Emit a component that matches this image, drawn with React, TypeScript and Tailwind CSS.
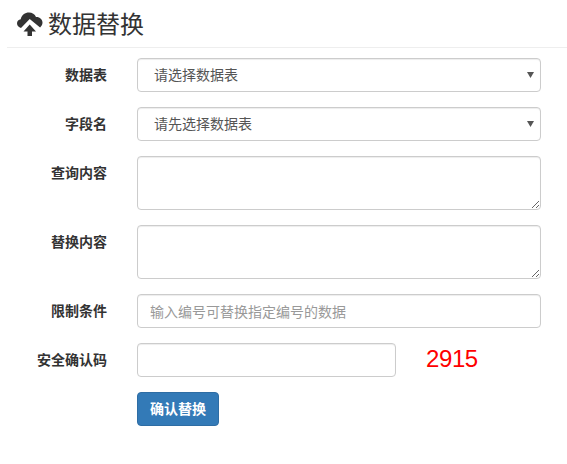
const fontStack = "font-['Open_Sans','Noto_Sans_CJK_SC',sans-serif]";

const CloudUpload = () => (
  <svg viewBox="0 0 26 24" className="w-[26px] h-[24px]" aria-hidden="true">
    <path
      fill="#333"
      d="M4 16C1.700 15.500 0 13.700 0 11.300 0 9 1.700 7.400 3.700 7.200 4.500 3.200 8 0.500 12 0.500c3.200 0 5.800 1.800 7 4.400 3.600-0.300 6.500 2.300 6.500 5.700 0 2-0.900 3.700-2.400 4.800L12.700 7z"
    />
    <path fill="#333" d="M12.700 12.500 19 19.500H15V24H10.500V19.500H6.500z" />
  </svg>
);

const Label = ({ text }: { text: string }) => (
  <label className="w-[100px] shrink-0 text-right text-sm font-bold text-[#333] pt-[7px] leading-5">{text}</label>
);

const Select = ({ text }: { text: string }) => (
  <div className="relative flex-1">
    <select className="w-full h-[34px] appearance-none rounded border border-[#ccc] bg-white pl-4 pr-6 text-sm text-[#555] shadow-[inset_0_1px_1px_rgba(0,0,0,0.075)]">
      <option>{text}</option>
    </select>
    <svg viewBox="0 0 7 6" className="absolute right-[7px] top-[14px] w-[7px] h-[6px] pointer-events-none">
      <path d="M0 0H7L3.500 6z" fill="#555" />
    </svg>
  </div>
);

const Area = () => (
  <textarea className="flex-1 block h-[54px] rounded border border-[#ccc] bg-white shadow-[inset_0_1px_1px_rgba(0,0,0,0.075)]" />
);

export default function App() {
  return (
    <div className={`w-[567px] h-[464px] bg-white overflow-hidden ${fontStack}`}>
      <div className="ml-[7px] h-[48px] border-b border-[#eee] flex items-center gap-[5px] pl-[10px]">
        <CloudUpload />
        <h1 className="text-2xl leading-[26px] pt-[1px] font-normal text-[#333]">数据替换</h1>
      </div>
      <form className="mt-[10px] flex flex-col gap-[15px] pl-[7px] pr-[26px]">
        <div className="flex gap-[30px]">
          <Label text="数据表" />
          <Select text="请选择数据表" />
        </div>
        <div className="flex gap-[30px]">
          <Label text="字段名" />
          <Select text="请先选择数据表" />
        </div>
        <div className="flex gap-[30px]">
          <Label text="查询内容" />
          <Area />
        </div>
        <div className="flex gap-[30px]">
          <Label text="替换内容" />
          <Area />
        </div>
        <div className="flex gap-[30px]">
          <Label text="限制条件" />
          <input
            placeholder="输入编号可替换指定编号的数据"
            className="flex-1 h-[34px] rounded border border-[#ccc] bg-white px-3 text-sm text-[#555] placeholder:text-[#999] shadow-[inset_0_1px_1px_rgba(0,0,0,0.075)]"
          />
        </div>
        <div className="flex gap-[30px]">
          <Label text="安全确认码" />
          <input className="w-[259px] h-[34px] rounded border border-[#ccc] bg-white shadow-[inset_0_1px_1px_rgba(0,0,0,0.075)]" />
          <span className="text-[24px] leading-[32px] tracking-[-0.4px] text-[#f00] font-['Liberation_Sans',sans-serif]">2915</span>
        </div>
        <div className="flex pl-[130px]">
          <button type="button" className="h-[34px] w-[82px] rounded border border-[#2e6da4] bg-[#337ab7] text-sm font-bold text-white">
            确认替换
          </button>
        </div>
      </form>
    </div>
  );
}
